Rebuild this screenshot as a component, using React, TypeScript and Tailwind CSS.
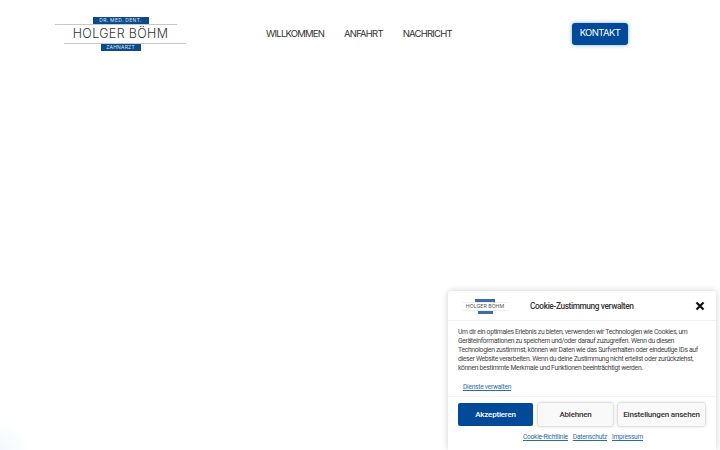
function Logo({ small }: { small?: boolean }) {
  if (small) {
    return (
      <div className="w-[46px] flex flex-col items-center font-['Inter',sans-serif]">
        <div className="w-[20px] h-[3px] bg-[#3a6ea5]" />
        <div className="w-full h-px bg-[#eeeeee]" />
        <div className="text-[5.2px] leading-[7px] text-[#555] whitespace-nowrap">HOLGER BÖHM</div>
        <div className="w-full h-px bg-[#eeeeee]" />
        <div className="w-[15px] h-[3px] bg-[#3a6ea5]" />
      </div>
    );
  }
  return (
    <div className="w-[131px] flex flex-col items-center font-['Inter',sans-serif]">
      <div className="w-[56px] h-[7px] bg-[#0d4a8a] text-[#dbe6f2] text-[5px] leading-[7px] text-center tracking-[0.3px] whitespace-nowrap">DR. MED. DENT.</div>
      <div className="w-[122px] h-px bg-[#c8c8c8] self-start" />
      <div className="text-[12.5px] leading-[18px] font-light text-[#333] tracking-[0.35px] whitespace-nowrap">HOLGER BÖHM</div>
      <div className="w-[122px] h-px bg-[#c8c8c8] self-end" />
      <div className="w-[40px] h-[7px] bg-[#0d4a8a] text-[#dbe6f2] text-[5px] leading-[7px] text-center tracking-[0.2px]">ZAHNARZT</div>
    </div>
  );
}

export default function App() {
  return (
    <div className="relative w-[720px] h-[450px] overflow-hidden bg-white">
      <div className="absolute left-[-30px] bottom-[-30px] w-[60px] h-[60px] rounded-full bg-[radial-gradient(circle,#f2f8fd_0%,#ffffff_70%)]" />
      <header className="flex items-center h-[67px] pl-[55px] pr-[92px] font-['Inter',sans-serif]">
        <div className="w-[211px]"><Logo /></div>
        <nav className="flex gap-[20px] mt-[1px] text-[9.5px] tracking-[-0.8px] text-[#333]">
          <a>WILLKOMMEN</a>
          <a>ANFAHRT</a>
          <a>NACHRICHT</a>
        </nav>
        <a className="ml-auto w-[56px] h-[22px] flex items-center justify-center rounded-[3px] bg-[#004a99] text-white text-[9.5px] tracking-[-0.6px] shadow-[0_0_4px_rgba(0,74,153,0.45)]">KONTAKT</a>
      </header>
      <div className="absolute left-[448px] top-[291px] w-[268px] h-[159px] bg-white rounded-t-[3px] shadow-[0_0_6px_rgba(0,0,0,0.2)] font-['Roboto',sans-serif] text-[#222]">
        <div className="flex items-center h-[30px] pt-[1px] pl-[14px] pr-[11px] border-b border-[#f2f2f2]">
          <Logo small />
          <div className="flex-1 pl-[22px] text-[8.3px] tracking-[-0.38px] font-medium text-[#333]">Cookie-Zustimmung verwalten</div>
          <svg width="10" height="10" viewBox="0 0 10 10"><path d="M1.5 1.5L8.5 8.5M8.5 1.5L1.5 8.5" stroke="#111" strokeWidth="2.2" /></svg>
        </div>
        <p className="px-[10px] pt-[7px] text-[6.8px] tracking-[-0.33px] leading-[9px] text-[#444]">
          Um dir ein optimales Erlebnis zu bieten, verwenden wir Technologien wie Cookies, um Geräteinformationen zu speichern und/oder darauf zuzugreifen. Wenn du diesen Technologien zustimmst, können wir Daten wie das Surfverhalten oder eindeutige IDs auf dieser Website verarbeiten. Wenn du deine Zustimmung nicht erteilst oder zurückziehst, können bestimmte Merkmale und Funktionen beeinträchtigt werden.
        </p>
        <div className="pl-[15px] pt-[10px] pb-[4px] text-[6.6px] tracking-[-0.24px] leading-[9px] text-[#2e6da4] underline border-b border-[#f5f5f5]">Dienste verwalten</div>
        <div className="flex gap-[5px] pl-[10px] mt-[6px]">
          <button className="w-[75px] h-[23px] rounded-[2px] bg-[#004a99] text-white text-[8px] tracking-[-0.2px] font-medium">Akzeptieren</button>
          <button className="w-[75px] h-[23px] rounded-[2px] bg-[#f9f9f9] text-[#333] text-[8px] tracking-[-0.2px] font-medium shadow-[0_0_3px_rgba(0,0,0,0.35)]">Ablehnen</button>
          <button className="w-[87px] h-[23px] rounded-[2px] bg-[#f9f9f9] text-[#333] text-[8px] tracking-[-0.2px] font-medium shadow-[0_0_3px_rgba(0,0,0,0.35)]">Einstellungen ansehen</button>
        </div>
        <div className="flex justify-center gap-[5px] mt-[7px] pl-[2px] text-[6.6px] tracking-[-0.24px] leading-[9px] text-[#2e6da4] underline">
          <a>Cookie-Richtlinie</a>
          <a>Datenschutz</a>
          <a>Impressum</a>
        </div>
      </div>
    </div>
  );
}
